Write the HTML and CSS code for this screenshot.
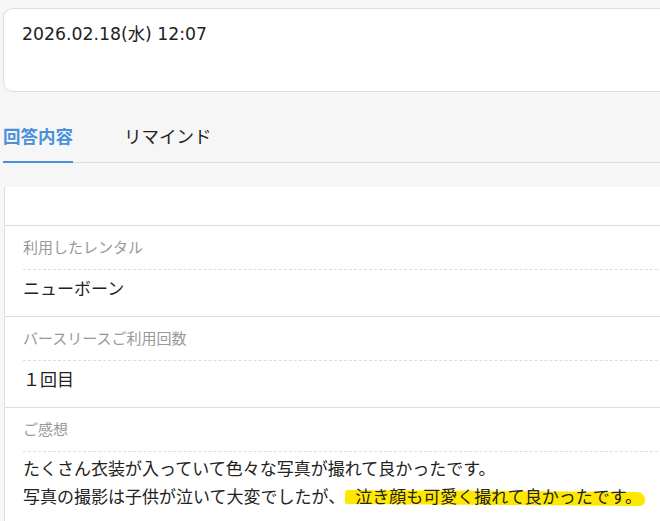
FILE: index.html
```html
<!DOCTYPE html>
<html lang="ja">
<head>
    <meta charset="UTF-8">
    <meta name="viewport" content="width=device-width, initial-scale=1.0">
    <title>回答内容</title>
    <link rel="stylesheet" href="styles.css">
</head>
<body>
    <div class="page">
        <div class="date-card">2026.02.18(水) 12:07</div>

        <div class="tabs">
            <div class="tab active">回答内容</div>
            <div class="tab">リマインド</div>
        </div>

        <div class="answers">
            <div class="answer-row empty"></div>
            <div class="answer-row">
                <div class="answer-label">利用したレンタル</div>
                <div class="answer-value">ニューボーン</div>
            </div>
            <div class="answer-row">
                <div class="answer-label">バースリースご利用回数</div>
                <div class="answer-value">１回目</div>
            </div>
            <div class="answer-row last">
                <div class="answer-label">ご感想</div>
                <div class="answer-value comment">たくさん衣装が入っていて色々な写真が撮れて良かったです。<br>写真の撮影は子供が泣いて大変でしたが、<span class="marker">泣き顔も可愛く撮れて良かったです。</span></div>
            </div>
        </div>
    </div>
</body>
</html>
```

FILE: styles.css
```css
html, body {
    margin: 0;
    padding: 0;
    background: #f6f6f6;
    overflow: hidden;
}
body {
    font-family: "DejaVu Sans", "Noto Sans CJK JP", sans-serif;
    color: #222;
}
.page {
    width: 720px;
    padding: 8px 0 0 3px;
}
.date-card {
    background: #fff;
    border: 1px solid #ddd;
    border-radius: 10px;
    box-sizing: border-box;
    height: 84px;
    padding: 13px 18px 0 18px;
    font-size: 17.3px;
    line-height: 24px;
}
.tabs {
    display: flex;
    gap: 51px;
    margin-top: 33px;
    border-bottom: 1px solid #ddd;
}
.tab {
    font-size: 17.5px;
    line-height: 24px;
    padding-bottom: 12px;
    margin-bottom: -1px;
    border-bottom: 2px solid transparent;
    color: #222;
}
.tab.active {
    color: #4a90db;
    font-weight: bold;
    border-bottom-color: #4a90db;
}
.answers {
    position: relative;
    z-index: 0;
    margin: 24px 0 0 1px;
    background: #fff;
    border-left: 1px solid #ddd;
}
.answer-row {
    padding: 11px 0 15px 18px;
    border-bottom: 1px solid #ddd;
}
.answer-row.empty {
    height: 39px;
    padding: 0;
    box-sizing: border-box;
}
.answer-row.last {
    border-bottom: none;
}
.answer-label {
    font-size: 15px;
    line-height: 22px;
    color: #999;
    padding-bottom: 10px;
    border-bottom: 1px dashed #ddd;
}
.answer-value {
    font-size: 17px;
    line-height: 24px;
    padding-top: 7px;
}
.answer-value.comment {
    line-height: 28px;
    padding-top: 3px;
}
.marker {
    position: relative;
    padding-left: 10px;
}
.marker::before {
    content: "";
    position: absolute;
    left: 0;
    right: -3px;
    top: 4px;
    bottom: 2px;
    background: #ffe800;
    border-radius: 3px 8px 5px 2px;
    transform: rotate(0.4deg);
    z-index: -1;
}
```
